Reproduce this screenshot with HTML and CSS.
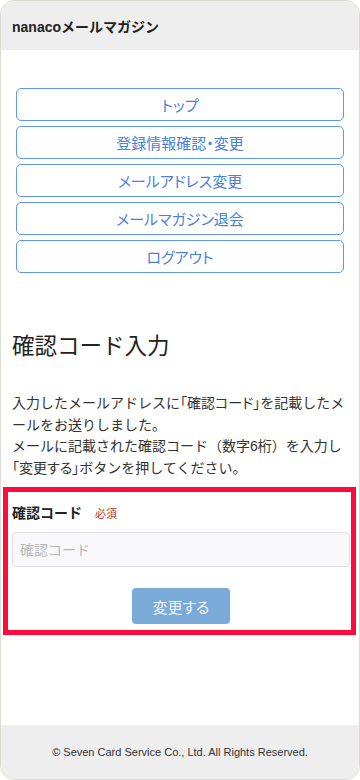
FILE: index.html
```html
<!DOCTYPE html>
<html lang="ja">
<head>
  <meta charset="UTF-8">
  <meta name="viewport" content="width=device-width, initial-scale=1.0">
  <title>nanacoメールマガジン</title>
  <link rel="stylesheet" href="styles.css">
</head>
<body>
  <div class="frame">
    <div class="header">nanacoメールマガジン</div>

    <div class="main">
      <div class="menu">
        <a href="#">トップ</a>
        <a href="#">登録情報確認・変更</a>
        <a href="#">メールアドレス変更</a>
        <a href="#">メールマガジン退会</a>
        <a href="#">ログアウト</a>
      </div>

      <h1>確認コード入力</h1>
      <p class="lead">入力したメールアドレスに<span class="quote">「確認コード」</span>を記載したメールをお送りしました。<br>メールに記載された確認コード（数字6桁）を入力し<br><span class="quote">「変更する」</span>ボタンを押してください。</p>

      <div class="form-box">
        <div class="label">確認コード<span class="required">必須</span></div>
        <input type="text" class="input" placeholder="確認コード">
        <div class="actions">
          <button class="btn-submit" disabled>変更する</button>
        </div>
      </div>
    </div>

    <div class="footer">© Seven Card Service Co., Ltd. All Rights Reserved.</div>
  </div>
</body>
</html>
```

FILE: styles.css
```css
body {
  margin: 0;
  background-color: #ffffff;
  font-family: 'Liberation Sans', 'Noto Sans CJK JP', sans-serif;
  color: #333;
}

.frame {
  display: flex;
  flex-direction: column;
  height: 780px;
  box-sizing: border-box;
  border: 1px solid #dbdbd3;
  border-radius: 14px;
  overflow: hidden;
}

.header {
  height: 49px;
  background-color: #eeeeee;
  display: flex;
  align-items: center;
  padding-left: 11px;
  font-size: 14px;
  font-weight: bold;
  color: #222;
}

.main {
  flex: 1;
}

.menu {
  display: flex;
  flex-direction: column;
  gap: 5px;
  margin-top: 38px;
  padding: 0 15px;
}

.menu a {
  display: flex;
  align-items: center;
  justify-content: center;
  height: 33px;
  box-sizing: border-box;
  border: 1.5px solid #5f97ee;
  border-radius: 5px;
  color: #4a80dc;
  font-size: 15px;
  font-feature-settings: "palt";
  text-decoration: none;
}

h1 {
  margin: 55px 0 0 11px;
  font-size: 22.5px;
  font-weight: normal;
  color: #222;
  font-family: 'Noto Sans CJK JP', sans-serif;
}

.lead {
  margin: 33px 11px 0;
  font-size: 14px;
  line-height: 21.6px;
  color: #333;
}

.quote {
  font-feature-settings: "palt";
}

.form-box {
  margin: 8px 3px 0 2px;
  border: 5px solid #ff0a3c;
  padding: 10px 1px 6px 4px;
}

.label {
  font-size: 14px;
  font-weight: bold;
  color: #222;
}

.required {
  margin-left: 13px;
  font-size: 11px;
  font-weight: normal;
  color: #c0392b;
}

.input {
  display: block;
  width: 100%;
  height: 35px;
  box-sizing: border-box;
  margin-top: 10px;
  padding: 0 7px;
  border: 1px solid #dde0e6;
  border-radius: 4px;
  background-color: #f8f8fa;
  font-family: inherit;
  font-size: 14px;
}

.input::placeholder {
  color: #b8b8b8;
}

.actions {
  display: flex;
  justify-content: center;
  margin-top: 21px;
}

.btn-submit {
  width: 98px;
  height: 36px;
  border: none;
  border-radius: 4px;
  background-color: #7aaad8;
  color: #eef4fb;
  font-family: inherit;
  font-feature-settings: "palt";
  font-size: 15px;
}

.footer {
  height: 54px;
  background-color: #eeeeee;
  display: flex;
  align-items: center;
  justify-content: center;
  font-size: 11px;
  color: #333;
}
```
